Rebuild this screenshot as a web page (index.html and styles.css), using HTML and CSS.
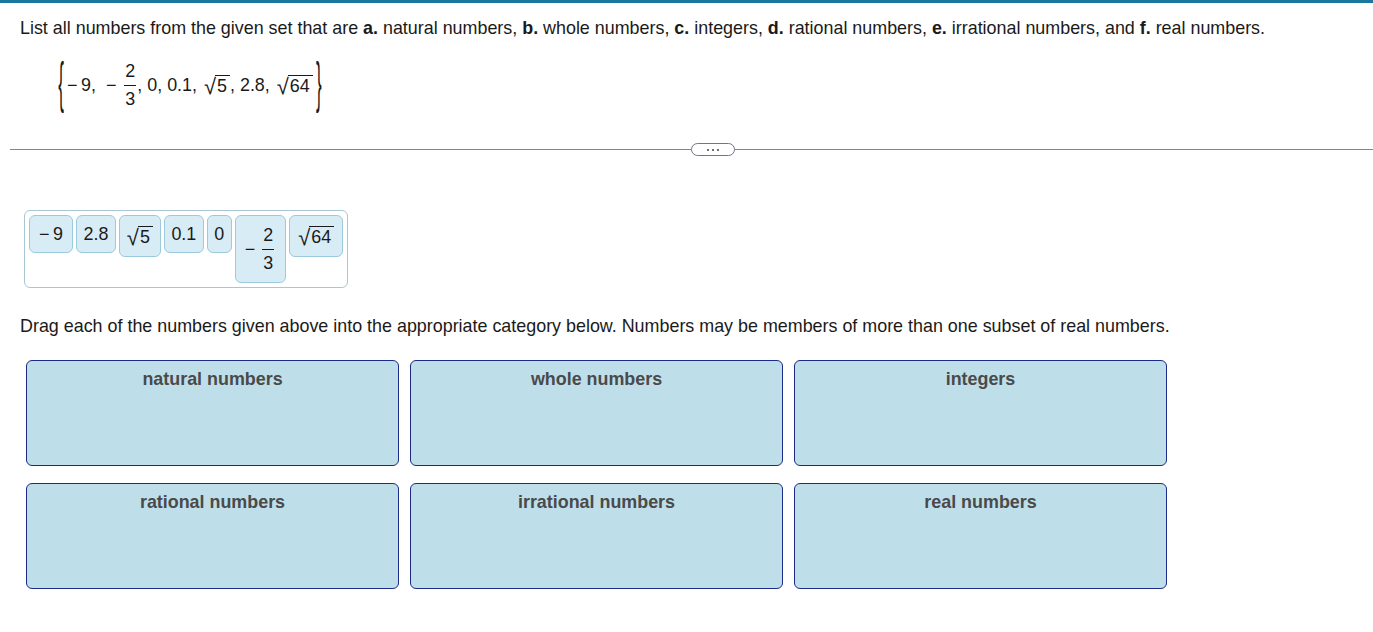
FILE: index.html
```html
<!DOCTYPE html>
<html>
<head>
<meta charset="utf-8">
<link rel="stylesheet" href="styles.css">
</head>
<body>
<div class="topbar"></div>
<p class="prompt">List all numbers from the given set that are <b>a.</b> natural numbers, <b>b.</b> whole numbers, <b>c.</b> integers, <b>d.</b> rational numbers, <b>e.</b> irrational numbers, and <b>f.</b> real numbers.</p>
<div class="set">
  <span class="brace">{</span>
  <span class="t">&minus;&thinsp;9,&nbsp; &minus;</span>
  <span class="frac"><span class="num">2</span><span class="den">3</span></span>
  <span class="t">, 0, 0.1,&nbsp;</span>
  <span class="sqrt"><span class="rad">&radic;</span><span class="radicand">5</span></span>
  <span class="t">, 2.8,&nbsp;</span>
  <span class="sqrt"><span class="rad">&radic;</span><span class="radicand">64</span></span>
  <span class="brace">}</span>
</div>
<div class="divider">
  <span class="line line-left"></span>
  <span class="pill"><i></i><i></i><i></i></span>
  <span class="line"></span>
</div>
<div class="tray">
  <span class="chip chip-neg"><span class="t">&minus;&thinsp;9</span></span>
  <span class="chip"><span class="t">2.8</span></span>
  <span class="chip chip-rad"><span class="sqrt"><span class="rad">&radic;</span><span class="radicand">5</span></span></span>
  <span class="chip"><span class="t">0.1</span></span>
  <span class="chip"><span class="t">0</span></span>
  <span class="chip chip-frac"><span class="t">&minus;</span><span class="frac"><span class="num">2</span><span class="den">3</span></span></span>
  <span class="chip chip-rad chip-wide"><span class="sqrt"><span class="rad">&radic;</span><span class="radicand">64</span></span></span>
</div>
<p class="drag">Drag each of the numbers given above into the appropriate category below. Numbers may be members of more than one subset of real numbers.</p>
<div class="cats">
  <div class="cat">natural numbers</div>
  <div class="cat">whole numbers</div>
  <div class="cat">integers</div>
  <div class="cat">rational numbers</div>
  <div class="cat">irrational numbers</div>
  <div class="cat">real numbers</div>
</div>
</body>
</html>
```
FILE: styles.css
```css
html, body {
  margin: 0;
  padding: 0;
  background: #fff;
}
body {
  font-family: "Liberation Sans", Arial, sans-serif;
  font-size: 17.9px;
  color: #1a1a1a;
}
.topbar {
  height: 3px;
  background: #1b76a0;
}
.prompt {
  margin: 15px 0 0 20px;
  line-height: 20px;
}
.set {
  display: flex;
  align-items: center;
  margin: 19px 0 0 55px;
  height: 56px;
  white-space: pre;
}
.t {
  line-height: 20px;
  white-space: pre;
}
.brace {
  display: inline-block;
  font-size: 17px;
  line-height: 16px;
  transform: scaleY(3.3);
  width: 12px;
  text-align: center;
}
.frac {
  display: inline-flex;
  flex-direction: column;
  align-items: stretch;
  text-align: center;
  margin: 0 1px 0 8px;
}
.num {
  line-height: 18px;
  padding: 0 1px 5px;
}
.den {
  line-height: 18px;
  padding: 4px 1px 0;
  border-top: 1px solid #1a1a1a;
}
.sqrt {
  display: inline-flex;
  align-items: flex-end;
}
.rad {
  font-size: 22px;
  line-height: 22px;
  position: relative;
  top: 2px;
}
.radicand {
  border-top: 1px solid #1a1a1a;
  line-height: 18px;
  margin-left: -1px;
  padding: 1px 3px 1px 2px;
}
.set .sqrt {
  margin: 0 0 0 2px;
}
.divider {
  display: flex;
  align-items: center;
  margin: 30px 0 0 10px;
  height: 13px;
}
.line {
  flex: 1;
  height: 1px;
  background: #7f8691;
}
.line-left {
  flex: 0 0 681px;
}
.pill {
  box-sizing: border-box;
  width: 44px;
  height: 13px;
  border: 1px solid #6f7784;
  border-radius: 7px;
  display: flex;
  align-items: center;
  justify-content: center;
  gap: 3px;
}
.pill i {
  width: 2px;
  height: 2px;
  background: #3d4450;
  border-radius: 1px;
}
.tray {
  box-sizing: border-box;
  margin: 54px 0 0 24px;
  width: 324px;
  height: 78px;
  border: 1px solid #a8c6d4;
  border-radius: 6px;
  padding: 4px;
  display: flex;
  align-items: flex-start;
  gap: 3px;
}
.chip {
  box-sizing: border-box;
  height: 38px;
  padding: 0 6.5px;
  background: #d8ecf5;
  border: 1px solid #9ccade;
  border-radius: 6px;
  display: flex;
  align-items: center;
}
.chip-neg {
  padding: 0 9px;
}
.chip-rad {
  height: 42px;
  padding: 0 7px;
}
.chip-wide {
  padding: 0 8px;
}
.chip-frac {
  height: 68px;
  padding: 0 11px 0 9px;
}
.chip-frac .frac {
  margin: 0 0 0 7px;
}
.drag {
  margin: 28px 0 0 20px;
  line-height: 20px;
}
.cats {
  display: grid;
  grid-template-columns: repeat(3, 373px);
  grid-auto-rows: 106px;
  column-gap: 11px;
  row-gap: 17px;
  margin: 24px 0 0 26px;
}
.cat {
  box-sizing: border-box;
  background: #bedfea;
  border: 1px solid #1c2b86;
  border-radius: 6px;
  text-align: center;
  font-weight: bold;
  color: #4a4a4a;
  padding-top: 9px;
  line-height: 18px;
}
```
